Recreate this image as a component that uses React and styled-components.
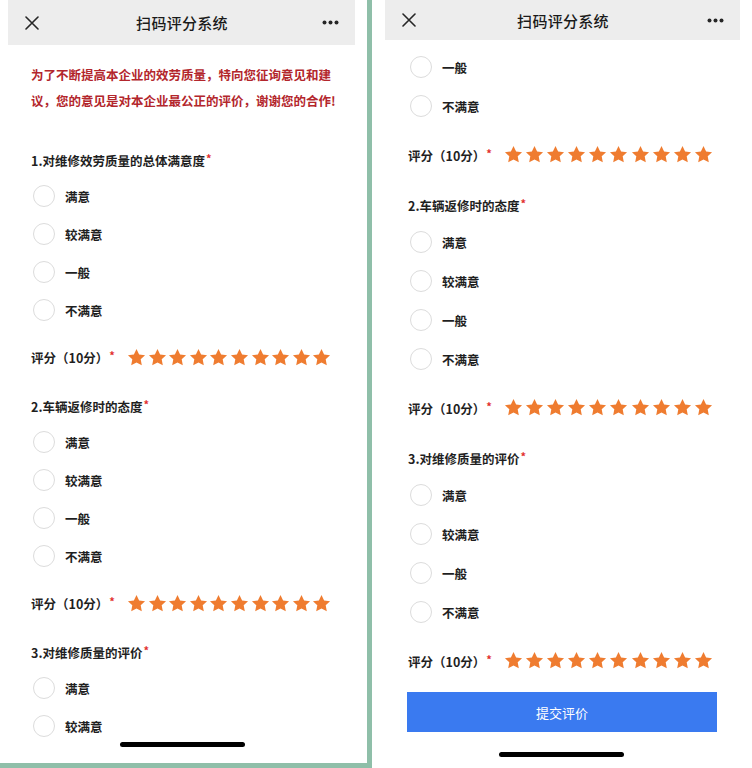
import React from 'react';
import styled, { createGlobalStyle } from 'styled-components';

const GlobalStyle = createGlobalStyle`
    html, body {
        margin: 0;
        padding: 0;
        background: #8fbfa9;
    }
    body {
        font-family: "Noto Sans CJK SC", "Noto Sans", sans-serif;
        color: #1f1f1f;
    }
`;

const OPTIONS = ['满意', '较满意', '一般', '不满意'];

const LEFT = {
    width: 367, height: 763, headH: 45, headL: 8, headR: 12,
    padL: 31, padT: 0, rowH: 38, rateH: 56, starGap: 1.6, bar: {left: 120, bottom: 16},
};

const RIGHT = {
    width: 380, height: 768, headH: 40, headL: 13, headR: 12,
    padL: 36, padT: 7.5, rowH: 39, rateH: 58, starGap: 2.1, bar: {left: 127, bottom: 11},
};

const LEFT_SECTIONS = [
    {title: '1.对维修效劳质量的总体满意度', options: OPTIONS, rating: true},
    {title: '2.车辆返修时的态度', options: OPTIONS, rating: true},
    {title: '3.对维修质量的评价', options: OPTIONS.slice(0, 2)},
];

const RIGHT_SECTIONS = [
    {options: OPTIONS.slice(2), rating: true},
    {title: '2.车辆返修时的态度', options: OPTIONS, rating: true},
    {title: '3.对维修质量的评价', options: OPTIONS, rating: true},
];

function CloseIcon() {
    return (
        <svg width="14" height="14" viewBox="0 0 14 14">
            <path d="M1 1L13 13M13 1L1 13" stroke="#262626" strokeWidth="1.6" strokeLinecap="round"/>
        </svg>
    );
}

function MoreIcon() {
    return (
        <svg width="17" height="5" viewBox="0 0 17 5">
            <circle cx="2.5" cy="2.5" r="2" fill="#262626"/>
            <circle cx="8.5" cy="2.5" r="2" fill="#262626"/>
            <circle cx="14.5" cy="2.5" r="2" fill="#262626"/>
        </svg>
    );
}

function Star() {
    return (
        <svg width="19" height="19" viewBox="0 0 24 24">
            <path d="M12 1.2l3.3 6.9 7.5 1-5.5 5.2 1.4 7.5L12 18.2l-6.7 3.6 1.4-7.5L1.2 9.1l7.5-1z" fill="#ef7c30"/>
        </svg>
    );
}

function Phone({cfg, sections, intro, submit}) {
    return (
        <Panel $w={cfg.width} $h={cfg.height}>
            <Header $h={cfg.headH} $l={cfg.headL} $r={cfg.headR}>
                <HeaderIcon><CloseIcon/></HeaderIcon>
                <Title>扫码评分系统</Title>
                <HeaderIcon $end><MoreIcon/></HeaderIcon>
            </Header>
            <Content $l={cfg.padL} $t={cfg.padT}>
                {intro && (
                    <Intro>为了不断提高本企业的效劳质量，特向您征询意见和建议，您的意见是对本企业最公正的评价，谢谢您的合作!</Intro>
                )}
                {sections.map((s, i) => (
                    <Section key={i}>
                        {s.title && (
                            <Question $h={cfg.rowH}>{s.title}<Req>*</Req></Question>
                        )}
                        {s.options.map((o) => (
                            <Option key={o} $h={cfg.rowH}>
                                <Radio/>
                                {o}
                            </Option>
                        ))}
                        {s.rating && (
                            <RatingRow $h={cfg.rateH}>
                                <RateLabel>评分（10分）<Req>*</Req></RateLabel>
                                <Stars $gap={cfg.starGap}>
                                    {Array.from({length: 10}).map((_, k) => <Star key={k}/>)}
                                </Stars>
                            </RatingRow>
                        )}
                    </Section>
                ))}
                {submit && <SubmitButton>提交评价</SubmitButton>}
            </Content>
            <HomeBar $left={cfg.bar.left} $bottom={cfg.bar.bottom}/>
        </Panel>
    );
}

export default function App() {
    return (
        <>
            <GlobalStyle/>
            <Page>
                <Phone cfg={LEFT} sections={LEFT_SECTIONS} intro/>
                <Phone cfg={RIGHT} sections={RIGHT_SECTIONS} submit/>
            </Page>
        </>
    );
}

const Page = styled.div`
    display: flex;
    align-items: flex-start;
    gap: 5px;
    width: 752px;
    height: 768px;
    overflow: hidden;
    background: #8fbfa9;
`;

const Panel = styled.div`
    position: relative;
    flex: none;
    width: ${(p) => p.$w}px;
    height: ${(p) => p.$h}px;
    background: #ffffff;
    overflow: hidden;
    display: flex;
    flex-direction: column;
`;

const Header = styled.div`
    flex: none;
    height: ${(p) => p.$h}px;
    margin: 0 ${(p) => p.$r}px 0 ${(p) => p.$l}px;
    padding: 0 16px 0 17px;
    background: #ededed;
    display: grid;
    grid-template-columns: 1fr auto 1fr;
    align-items: center;
`;

const HeaderIcon = styled.div`
    display: flex;
    align-items: center;
    justify-content: ${(p) => (p.$end ? 'flex-end' : 'flex-start')};
`;

const Title = styled.div`
    font-size: 15px;
    font-weight: 500;
    color: #1a1a1a;
    letter-spacing: 0.3px;
`;

const Content = styled.div`
    padding: ${(p) => p.$t}px 0 0 ${(p) => p.$l}px;
    display: flex;
    flex-direction: column;
`;

const Intro = styled.p`
    width: 308px;
    margin: 17px 0 25px;
    font-size: 12.5px;
    font-weight: 700;
    line-height: 26px;
    color: #b3262c;
`;

const Section = styled.div`
    display: flex;
    flex-direction: column;
`;

const Question = styled.div`
    height: ${(p) => p.$h}px;
    line-height: ${(p) => p.$h}px;
    font-size: 12.5px;
    font-weight: 700;
    color: #1f1f1f;
`;

const Req = styled.span`
    color: #e2302f;
    font-size: 11px;
    vertical-align: 3px;
    margin-left: 1px;
`;

const Option = styled.label`
    display: flex;
    align-items: center;
    gap: 10px;
    height: ${(p) => p.$h}px;
    font-size: 12.5px;
    font-weight: 700;
    color: #1f1f1f;
`;

const Radio = styled.span`
    width: 20px;
    height: 20px;
    margin-left: 2px;
    border: 1px solid #dcdcdc;
    border-radius: 50%;
    background: #fff;
`;

const RatingRow = styled.div`
    display: flex;
    align-items: center;
    height: ${(p) => p.$h}px;
`;

const RateLabel = styled.div`
    width: 96px;
    font-size: 12.5px;
    font-weight: 700;
    color: #1f1f1f;
    white-space: nowrap;
`;

const Stars = styled.div`
    display: flex;
    gap: ${(p) => p.$gap}px;
`;

const SubmitButton = styled.button`
    width: 310px;
    height: 40px;
    margin: 2.5px 0 0 -1px;
    border: none;
    background: #3a7af0;
    color: #ffffff;
    font-family: inherit;
    font-size: 13px;
    cursor: pointer;
`;

const HomeBar = styled.div`
    position: absolute;
    left: ${(p) => p.$left}px;
    bottom: ${(p) => p.$bottom}px;
    width: 125px;
    height: 5px;
    border-radius: 3px;
    background: #000000;
`;
